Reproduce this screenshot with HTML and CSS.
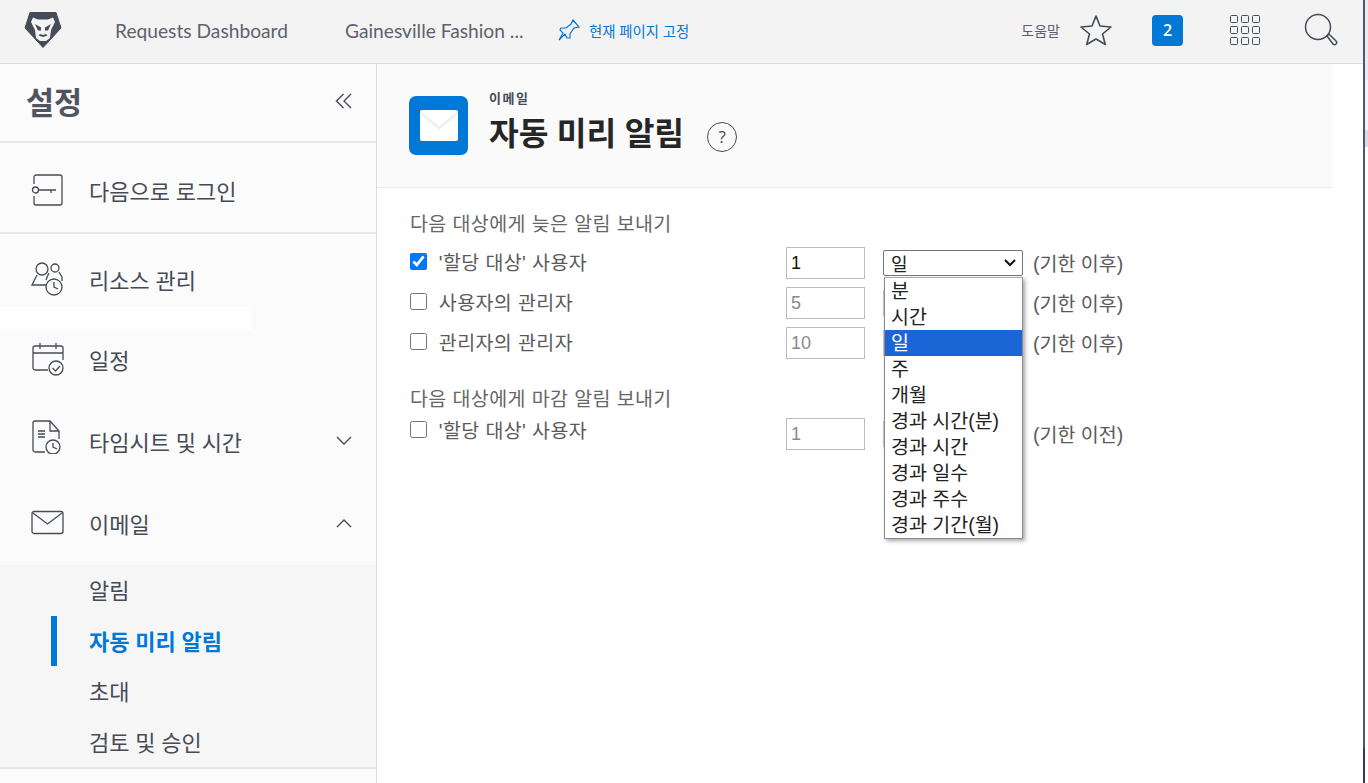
FILE: index.html
```html
<!DOCTYPE html>
<html lang="ko">
<head>
    <meta charset="UTF-8">
    <title>자동 미리 알림</title>
    <link rel="stylesheet" href="styles.css">
</head>
<body>

<header class="topbar">
    <svg class="logo" viewBox="0 0 38 38" width="38" height="38">
        <path fill="#454b57" stroke="#454b57" stroke-linejoin="round" d="M6 1.500H32L37 17 19 36.500 1 17z"/>
        <path fill="#f3f3f3" d="M9 6.500L14 8.500H24L29 6.500 31 11 27 19 26 27 22 30H16L12 27 11 19 7 11z"/>
        <path fill="#454b57" d="M11 13L17 16.500V19.500H14zM27 13L21 16.500V19.500H24zM14.500 24.500L19 26 23.500 24.500 22 23 19 24 16 23z"/>
    </svg>
    <a class="crumb crumb-first">Requests Dashboard</a>
    <a class="crumb crumb-second">Gainesville Fashion ...</a>
    <a class="pin">
        <svg viewBox="0 0 24 24" width="24" height="24" fill="none" stroke="#0078d7" stroke-width="1.2">
            <path d="M16 2l6 7-5 1-4 6 0 4-3 0-2-4-6 6 4-7-3-3 1-2 5 0 5-4z"/>
        </svg>
        <span>현재 페이지 고정</span>
    </a>
    <div class="topbar-right">
        <span class="help">도움말</span>
        <svg class="star" viewBox="0 0 32 32" width="32" height="32" fill="none" stroke="#454b57" stroke-width="1.6" stroke-linejoin="round">
            <path d="M16 2l4 10 11 1-8.500 7 2.800 10.500L16 25l-9.300 5.500L9.500 20 1 13l11-1z"/>
        </svg>
        <span class="badge">2</span>
        <div class="apps">
            <i></i><i></i><i></i><i></i><i></i><i></i><i></i><i></i><i></i>
        </div>
        <svg class="search" viewBox="0 0 34 34" width="34" height="34" fill="none" stroke="#454b57" stroke-width="1.5">
            <circle cx="14" cy="14" r="12.500"/>
            <path d="M23 23l2-2 7 7a1.500 1.500 0 0 1-3 3z" stroke-linejoin="round"/>
        </svg>
    </div>
</header>

<div class="layout">
    <aside class="sidebar">
        <div class="side-title">
            <h1>설정</h1>
            <svg viewBox="0 0 18 16" width="18" height="16" fill="none" stroke="#454b57" stroke-width="1.400">
                <path d="M8.500 1L1.500 8l7 7M16 1L9 8l7 7"/>
            </svg>
        </div>
        <div class="side-section login-row">
            <a class="side-item">
                <svg viewBox="0 0 34 34" width="34" height="34" fill="none" stroke="#454b57" stroke-width="1.300">
                    <path d="M3 11V4a2 2 0 0 1 2-2h24a2 2 0 0 1 2 2v26a2 2 0 0 1-2 2H5a2 2 0 0 1-2-2v-7"/>
                    <circle cx="4.500" cy="17" r="3"/>
                    <path d="M7.500 17H25M20 17v3"/>
                </svg>
                <span>다음으로 로그인</span>
            </a>
        </div>
        <div class="side-section nav">
            <a class="side-item item-resource">
                <svg viewBox="0 0 34 34" width="34" height="34" fill="none" stroke="#454b57" stroke-width="1.300">
                    <circle cx="11" cy="7" r="6"/>
                    <circle cx="24" cy="6" r="4"/>
                    <path d="M6 13L1 23h14M17 13l-2 5M28 10l3 5v4M18 11l-1 2"/>
                    <circle cx="23" cy="25" r="8"/>
                    <path d="M23 20v5l4 2"/>
                </svg>
                <span>리소스 관리</span>
            </a>
            <a class="side-item item-schedule">
                <svg viewBox="0 0 34 34" width="34" height="34" fill="none" stroke="#454b57" stroke-width="1.300">
                    <path d="M17 28H4a2 2 0 0 1-2-2V6a2 2 0 0 1 2-2h26a2 2 0 0 1 2 2v12M2 11h30M9 1v6M25 1v6"/>
                    <circle cx="25" cy="26" r="7"/>
                    <path d="M21.500 26l3 3 4.500-5"/>
                </svg>
                <span>일정</span>
            </a>
            <a class="side-item item-time">
                <svg viewBox="0 0 34 34" width="34" height="34" fill="none" stroke="#454b57" stroke-width="1.300">
                    <path d="M14 32H4a2 2 0 0 1-2-2V3a2 2 0 0 1 2-2h15l9 10v8M19 1v10h9M7 11h7M7 14h7M7 17h7"/>
                    <circle cx="22" cy="27" r="7"/>
                    <path d="M22 23v4l4 2"/>
                </svg>
                <span>타임시트 및 시간</span>
                <svg class="chev" viewBox="0 0 16 10" width="16" height="10" fill="none" stroke="#454b57" stroke-width="1.400">
                    <path d="M1 1l7 7 7-7"/>
                </svg>
            </a>
            <a class="side-item item-email">
                <svg viewBox="0 0 34 26" width="34" height="26" fill="none" stroke="#454b57" stroke-width="1.300">
                    <rect x="1" y="1.500" width="31" height="22" rx="2"/>
                    <path d="M2 3l14.500 11L31 3"/>
                </svg>
                <span>이메일</span>
                <svg class="chev" viewBox="0 0 16 10" width="16" height="10" fill="none" stroke="#454b57" stroke-width="1.400">
                    <path d="M1 9l7-7 7 7"/>
                </svg>
            </a>
        </div>
        <ul class="subnav">
            <li>알림</li>
            <li class="active">자동 미리 알림</li>
            <li>초대</li>
            <li>검토 및 승인</li>
        </ul>
        <div class="white-strip"></div>
    </aside>

    <main class="content">
        <div class="page-head">
            <div class="head-icon">
                <div class="envelope">
                    <svg viewBox="0 0 38 31" width="38" height="31">
                        <path fill="#f0f0f0" d="M0 1l19 15L38 1v3L19 20 0 4z"/>
                    </svg>
                </div>
            </div>
            <div class="head-text">
                <div class="eyebrow">이메일</div>
                <div class="title-row">
                    <h2>자동 미리 알림</h2>
                    <span class="help-circle">?</span>
                </div>
            </div>
        </div>

        <div class="form">
            <h3 class="group-title">다음 대상에게 늦은 알림 보내기</h3>
            <div class="row">
                <label class="check"><input type="checkbox" checked> '할당 대상' 사용자</label>
                <input class="num" type="text" value="1">
                <div class="select">
                    <span>일</span>
                    <svg viewBox="0 0 12 8" width="12" height="8" fill="none" stroke="#111" stroke-width="2"><path d="M1 1l5 5 5-5"/></svg>
                </div>
                <span class="when">(기한 이후)</span>
            </div>
            <div class="row">
                <label class="check"><input type="checkbox"> 사용자의 관리자</label>
                <input class="num off" type="text" value="5">
                <div class="select-blank"></div>
                <span class="when">(기한 이후)</span>
            </div>
            <div class="row">
                <label class="check"><input type="checkbox"> 관리자의 관리자</label>
                <input class="num off" type="text" value="10">
                <div class="select-blank"></div>
                <span class="when">(기한 이후)</span>
            </div>

            <h3 class="group-title second">다음 대상에게 마감 알림 보내기</h3>
            <div class="row">
                <label class="check check-high"><input type="checkbox"> '할당 대상' 사용자</label>
                <input class="num off" type="text" value="1">
                <div class="select-blank"></div>
                <span class="when">(기한 이전)</span>
            </div>

            <ul class="dropdown">
                <li>분</li>
                <li>시간</li>
                <li class="picked">일</li>
                <li>주</li>
                <li>개월</li>
                <li>경과 시간(분)</li>
                <li>경과 시간</li>
                <li>경과 일수</li>
                <li>경과 주수</li>
                <li>경과 기간(월)</li>
            </ul>
        </div>
    </main>
</div>

<div class="window-edge"></div>
<div class="window-corner"></div>

</body>
</html>
```

FILE: styles.css
```css
* {
    box-sizing: border-box;
}

html, body {
    height: 100%;
}

body {
    margin: 0;
    overflow: hidden;
    background-color: #fff;
    color: #454b57;
    font-family: "Open Sans", "Noto Sans CJK KR", sans-serif;
}

h1, h2, h3, ul {
    margin: 0;
    padding: 0;
    list-style: none;
}

/* top bar */
.topbar {
    display: flex;
    align-items: center;
    width: 1363px;
    height: 64px;
    padding: 0 0 3px 24px;
    background-color: #f3f3f3;
    border-bottom: 1px solid #dcdcdc;
}

.logo {
    flex: none;
}

.crumb {
    font-family: Lato, "Noto Sans CJK KR", sans-serif;
    font-size: 19.200px;
    color: #5c626d;
    white-space: nowrap;
}

.crumb-first {
    margin-left: 53px;
    width: 230px;
}

.crumb-second {
    width: 212px;
}

.pin {
    display: flex;
    align-items: center;
    gap: 8px;
    font-size: 14.400px;
    color: #0078d7;
}

.topbar-right {
    display: flex;
    align-items: center;
    margin-left: auto;
    padding-right: 25px;
}

.help {
    font-size: 14px;
    color: #5c626d;
    margin-right: 20px;
}

.star {
    margin-right: 40px;
}

.badge {
    display: block;
    width: 31px;
    height: 31px;
    margin-right: 47px;
    border-radius: 4px;
    background-color: #0078d7;
    color: #fff;
    font-size: 16px;
    font-weight: 600;
    line-height: 31px;
    text-align: center;
}

.apps {
    display: grid;
    grid-template-columns: repeat(3, 8px);
    gap: 3px;
    margin-right: 44px;
}

.apps i {
    display: block;
    height: 8px;
    border: 1.500px solid #454b57;
    border-radius: 1.500px;
}

/* layout */
.layout {
    display: flex;
    height: 719px;
}

.sidebar {
    position: relative;
    flex: none;
    width: 377px;
    background-color: #fbfbfb;
    border-right: 1px solid #dcdcdc;
}

.side-title {
    display: flex;
    align-items: center;
    justify-content: space-between;
    height: 79px;
    padding: 0 23px 4px 26px;
    border-bottom: 2px solid #e6e6e6;
}

.side-title h1 {
    font-size: 30.500px;
    font-weight: 700;
    color: #50555f;
}

.side-section.login-row {
    height: 91px;
    border-bottom: 2px solid #e6e6e6;
}

.side-item {
    display: flex;
    align-items: center;
    position: relative;
    padding-left: 31px;
    font-size: 22px;
    color: #454b57;
}

.side-item > svg:first-child {
    flex: none;
    margin-right: 24px;
}

.side-item .chev {
    position: absolute;
    right: 24px;
}

.login-row .side-item {
    height: 91px;
    padding-top: 2px;
}

.item-resource {
    height: 92px;
    padding-bottom: 2px;
}

.item-schedule {
    height: 68px;
    padding-bottom: 2px;
}

.item-time {
    height: 94px;
}

.item-time > svg:first-child {
    margin-top: -8px;
}

.item-email {
    height: 77px;
    padding-bottom: 7px;
}

.subnav {
    background-color: #f6f6f6;
    border-bottom: 2px solid #e6e6e6;
}

.subnav li {
    position: relative;
    height: 50.500px;
    padding-left: 89px;
    font-size: 22px;
    line-height: 50px;
    color: #454b57;
}

.subnav .active {
    font-weight: 700;
    color: #0078d7;
}

.subnav .active::before {
    content: "";
    position: absolute;
    left: 51px;
    top: 0;
    width: 6px;
    height: 50px;
    background-color: #0078d7;
}

/* stray white bar over the sidebar */
.white-strip {
    position: absolute;
    left: 0;
    top: 243px;
    width: 251px;
    height: 23px;
    background-color: #fff;
}

/* content */
.content {
    flex: 1;
    position: relative;
    min-width: 0;
}

.page-head {
    display: flex;
    width: 956px;
    height: 124px;
    padding: 32px 0 0 32px;
    background-color: #fafafa;
    border-bottom: 1px solid #eaeaea;
}

.head-icon {
    display: flex;
    align-items: center;
    justify-content: center;
    flex: none;
    width: 59px;
    height: 59px;
    border-radius: 7px;
    background-color: #0078d7;
}

.envelope {
    width: 38px;
    height: 31px;
    overflow: hidden;
    border-radius: 2px;
    background-color: #fff;
}

.envelope svg {
    display: block;
}

.head-text {
    margin: -6px 0 0 21px;
}

.eyebrow {
    font-size: 13px;
    font-weight: 700;
    letter-spacing: 1.500px;
    line-height: 16px;
    color: #454b57;
}

.title-row {
    display: flex;
    align-items: center;
    margin-top: 5px;
}

.title-row h2 {
    font-size: 32.300px;
    font-weight: 700;
    line-height: 42px;
    color: #262626;
}

.help-circle {
    display: block;
    width: 30px;
    height: 30px;
    margin: 9px 0 0 23px;
    border: 1.300px solid #454b57;
    border-radius: 50%;
    font-size: 17px;
    line-height: 27px;
    text-align: center;
}

.form {
    padding: 23px 0 0 33px;
    font-family: "Liberation Sans", "Noto Sans CJK KR", sans-serif;
    color: #5a5a5a;
}

.group-title {
    height: 31px;
    font-size: 19.500px;
    font-weight: 400;
    letter-spacing: 0.400px;
    line-height: 26px;
    color: #666;
}

.group-title.second {
    margin-top: 24px;
    height: 27px;
}

.row {
    display: flex;
    align-items: center;
    height: 40px;
    padding-top: 2px;
}

.check {
    display: flex;
    align-items: center;
    width: 376px;
    font-size: 19.500px;
    letter-spacing: 0.400px;
    white-space: pre;
    margin-top: -4px;
}

.check-high {
    margin-top: -10px;
}

.check input {
    flex: none;
    width: 17px;
    height: 17px;
    margin: 0 6px 0 0;
    accent-color: #0075ff;
}

.num {
    flex: none;
    width: 79px;
    height: 32px;
    padding: 0 4px;
    border: 1px solid #bdbdbd;
    border-radius: 0;
    font-family: "Liberation Sans", sans-serif;
    font-size: 18px;
    color: #111;
    background-color: #fff;
    outline: none;
}

.num.off {
    color: #8a8a8a;
}

.select {
    display: flex;
    align-items: center;
    justify-content: space-between;
    flex: none;
    width: 140px;
    height: 26px;
    margin-left: 18px;
    padding: 0 6px 0 7px;
    border: 1px solid #767676;
    border-radius: 2px;
    font-size: 18px;
    color: #222;
    background-color: #fff;
}

/* the closed selects that the open list hides, only their left edge shows */
.select-blank {
    flex: none;
    width: 140px;
    height: 26px;
    margin-left: 18px;
    border-left: 1px solid #c8c8c8;
}

.when {
    margin: -1px 0 0 10px;
    font-size: 19.500px;
    color: #5a5a5a;
}

/* the open list of the select */
.dropdown {
    position: absolute;
    left: 507px;
    top: 213px;
    width: 139px;
    background-color: #fff;
    border: 1px solid #8a8a8a;
    border-top-color: #aaa;
    box-shadow: 2px 2px 4px rgba(0, 0, 0, 0.35);
    font-size: 19.500px;
    color: #222;
}

.dropdown li {
    height: 26px;
    padding-left: 6px;
    line-height: 27px;
    white-space: nowrap;
}

.dropdown .picked {
    background-color: #1a66d6;
    color: #fff;
}

/* edge of the window behind the page */
.window-edge {
    position: absolute;
    left: 1363px;
    top: 0;
    bottom: 0;
    width: 5px;
    border-left: 2px solid #46597a;
    background: linear-gradient(#ececec 0 80px, #f5f5f5 80px 130px, #dcdcdc 130px 147px, #fff 147px);
}

.window-corner {
    position: absolute;
    left: 1363px;
    top: 748px;
    bottom: 0;
    width: 2px;
    background-color: #2f3e55;
}
```
